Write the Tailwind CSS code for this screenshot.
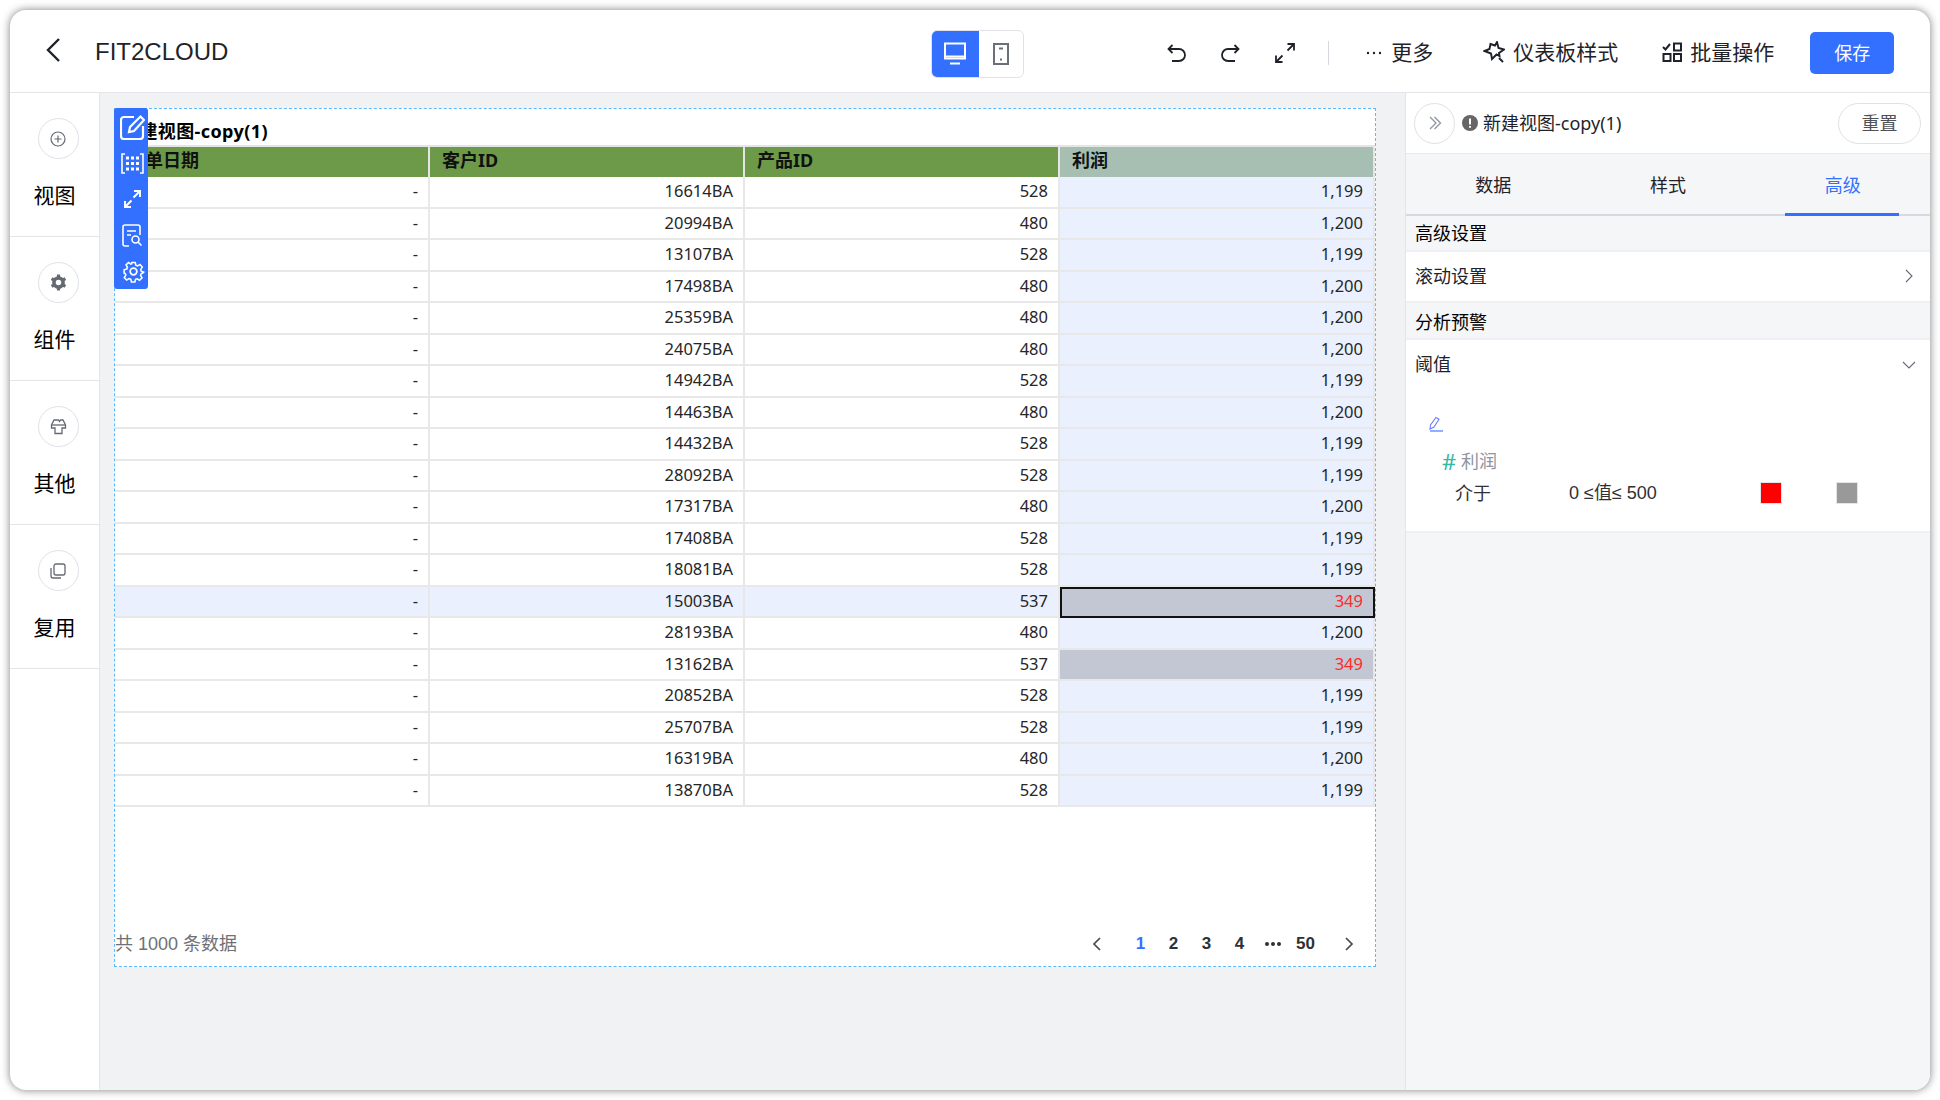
<!DOCTYPE html>
<html lang="zh-CN">
<head>
    <meta charset="UTF-8">
    <title>FIT2CLOUD</title>
    <script src="https://cdn.jsdelivr.net/npm/@tailwindcss/browser@4"></script>
</head>
<body class="bg-white h-[1100px] w-[1940px] overflow-hidden p-[10px] font-['Noto_Sans','Noto_Sans_CJK_SC',sans-serif] text-[#1f2329]">
<div class="w-[1920px] h-[1080px] bg-white rounded-[16px] overflow-hidden flex flex-col shadow-[0_0_8px_rgba(0,0,0,0.5)]">

    <!-- Header -->
    <header class="h-[83px] shrink-0 flex items-center pt-[3px] border-b border-[#e4e5e8]">
        <svg class="ml-[35px] w-[16px] h-[26px] -mt-[5px]" viewBox="0 0 16 26" fill="none" stroke="#1f2329" stroke-width="2.4"><path d="M14 2 3 13l11 11"/></svg>
        <span class="ml-[34px] text-[24px] -mt-[2px] font-['Liberation_Sans','Noto_Sans_CJK_SC',sans-serif]">FIT2CLOUD</span>
        <!-- device toggle -->
        <div class="ml-[703px] mt-[3px] flex h-[48px] w-[93px] rounded-[6px] overflow-hidden border border-[#e0e2e7]">
            <div class="w-[48px] -my-px -ml-px bg-[#3370ff] flex items-center justify-center">
                <svg class="w-[22px] h-[24px]" viewBox="0 0 22 24" fill="none" stroke="#fff" stroke-width="2"><rect x="1" y="1.500" width="20" height="15"/><path d="M1 14.500h20" stroke-width="2"/><path d="M6 21.500h10" stroke-width="2.200"/></svg>
            </div>
            <div class="flex-1 flex items-center justify-center">
                <svg class="w-[16px] h-[22px]" viewBox="0 0 16 22" fill="none" stroke="#6b6f76" stroke-width="2"><rect x="1" y="1" width="14" height="20"/><path d="M6 5.500h4M7 16.500h2"/></svg>
            </div>
        </div>
        <!-- undo / redo / full -->
        <svg class="ml-[142px] w-[22px] h-[22px]" viewBox="0 0 22 22" fill="none" stroke="#1f2329" stroke-width="1.800"><path d="M6.500 3 2.500 7l4 4"/><path d="M3 7h10a6 6 0 0 1 0 12H6"/></svg>
        <svg class="ml-[31px] w-[22px] h-[22px]" viewBox="0 0 22 22" fill="none" stroke="#1f2329" stroke-width="1.800"><path d="M15.500 3l4 4-4 4"/><path d="M19 7H9a6 6 0 0 0 0 12h7"/></svg>
        <svg class="ml-[33px] w-[22px] h-[22px]" viewBox="0 0 22 22" fill="none" stroke="#1f2329" stroke-width="1.800"><path d="M13.500 2H20v6.500M20 2l-6.500 6.500M2 13.500V20h6.500M2 20l6.500-6.500"/></svg>
        <div class="ml-[32px] w-px h-[24px] bg-[#d5d7dc]"></div>
        <svg class="ml-[37px] w-[16px] h-[4px]" viewBox="0 0 16 4" fill="#1f2329"><circle cx="2" cy="2" r="1.200"/><circle cx="8" cy="2" r="1.200"/><circle cx="14" cy="2" r="1.200"/></svg>
        <span class="ml-[9px] text-[21px]">更多</span>
        <svg class="ml-[50px] -mt-[2px] w-[22px] h-[22px]" viewBox="0 0 22 22" fill="none" stroke="#1f2329" stroke-width="1.900"><path d="M7.500 3l4.500 1.500L14 1l1.500 6 5.500 1.500-5 3.500.5 3-3-1.500-4.500 4.500-1-5.500L1.500 10l5-2z"/><path d="M16 17l4 4"/></svg>
        <span class="ml-[8px] text-[21px]">仪表板样式</span>
        <svg class="ml-[44px] -mt-[2px] w-[20px] h-[20px]" viewBox="0 0 20 20" fill="none" stroke="#1f2329" stroke-width="2"><path d="M1 5l2.500 2.500L8 2"/><rect x="12" y="1.500" width="7" height="7"/><rect x="1.500" y="12" width="7" height="7"/><rect x="12" y="12" width="7" height="7"/></svg>
        <span class="ml-[8px] text-[21px]">批量操作</span>
        <button class="ml-[36px] mt-[1px] w-[84px] h-[42px] bg-[#3370ff] rounded-[5px] text-white text-[18px]">保存</button>
    </header>

    <div class="flex-1 flex min-h-0">
        <!-- Left sidebar -->
        <aside class="w-[90px] shrink-0 border-r border-[#e4e5e8] text-black">
            <div class="h-[144px] border-b border-[#e4e5e8] flex flex-col items-center pt-[25px]">
                <div class="w-[41px] h-[41px] ml-[7px] rounded-full border border-[#dfe1e6] flex items-center justify-center">
                    <svg class="w-[16px] h-[16px]" viewBox="0 0 16 16" fill="none" stroke="#646a73" stroke-width="1.200"><circle cx="8" cy="8" r="7"/><path d="M8 4.500v7M4.500 8h7"/></svg>
                </div>
                <span class="mt-[21px] text-[21px]">视图</span>
            </div>
            <div class="h-[144px] border-b border-[#e4e5e8] flex flex-col items-center pt-[25px]">
                <div class="w-[41px] h-[41px] ml-[7px] rounded-full border border-[#dfe1e6] flex items-center justify-center">
                    <svg class="w-[17px] h-[17px]" viewBox="0 0 16 16" fill="none" stroke="#646a73"><circle cx="8" cy="8" r="4.300" stroke-width="3.400"/><path d="M8 .5v3M8 12.500v3M1.500 4.250l2.600 1.500M11.900 10.250l2.600 1.500M1.500 11.750l2.600-1.500M11.900 5.750l2.600-1.500" stroke-width="3"/></svg>
                </div>
                <span class="mt-[21px] text-[21px]">组件</span>
            </div>
            <div class="h-[144px] border-b border-[#e4e5e8] flex flex-col items-center pt-[25px]">
                <div class="w-[41px] h-[41px] ml-[7px] rounded-full border border-[#dfe1e6] flex items-center justify-center">
                    <svg class="w-[17px] h-[16px]" viewBox="0 0 16 16" fill="none" stroke="#646a73" stroke-width="1.300"><path d="M3.500 1H8l1 1.500L10 1h2.500L15 6v3h-3.500v5.500h-7V9H1V6z"/><path d="M1 6h14"/></svg>
                </div>
                <span class="mt-[21px] text-[21px]">其他</span>
            </div>
            <div class="h-[144px] border-b border-[#e4e5e8] flex flex-col items-center pt-[25px]">
                <div class="w-[41px] h-[41px] ml-[7px] rounded-full border border-[#dfe1e6] flex items-center justify-center">
                    <svg class="w-[16px] h-[16px]" viewBox="0 0 16 16" fill="none" stroke="#646a73" stroke-width="1.300"><rect x="4" y="1" width="11" height="11" rx="2"/><path d="M1 5v8a2 2 0 0 0 2 2h8"/></svg>
                </div>
                <span class="mt-[21px] text-[21px]">复用</span>
            </div>
        </aside>

        <!-- Canvas -->
        <main class="w-[1305px] shrink-0 bg-[#f1f2f4] pl-[14px] pt-[15px]">
            <div class="relative w-[1262px] h-[859px] bg-white border border-dashed border-[#5cb8ff] flex flex-col">
                <!-- hover toolbar -->
                <div class="absolute -left-px -top-px z-10 w-[34px] h-[181px] bg-[#3370ff] rounded-[3px] flex flex-col items-center pt-px pl-[2px] [&>div]:h-[36px] [&>div]:flex [&>div]:items-center [&>div]:justify-center">
                    <div><svg class="w-[25px] h-[26px]" viewBox="0 0 25 26" fill="none" stroke="#fff" stroke-width="2.200"><path d="M14 3H4a3 3 0 0 0-3 3v16a3 3 0 0 0 3 3h16a3 3 0 0 0 3-3V12"/><path d="M9 18l1-5L20.500 2.500l3.500 3.500L14 17z"/></svg></div>
                    <div><svg class="w-[23px] h-[21px]" viewBox="0 0 23 21" fill="none" stroke="#fff" stroke-width="1.600"><path d="M4 1H1v19h3M19 1h3v19h-3"/><path d="M5 5h13M5 10.500h13M5 16h13" stroke-width="3.200" stroke-dasharray="3 2"/></svg></div>
                    <div><svg class="w-[19px] h-[20px]" viewBox="0 0 19 20" fill="none" stroke="#fff" stroke-width="2"><path d="M11 2h6v6M17 2l-6.500 6.500M2 12v6h6M2 18l6.500-6.500"/></svg></div>
                    <div><svg class="w-[21px] h-[23px]" viewBox="0 0 21 23" fill="none" stroke="#fff" stroke-width="1.600"><path d="M7 22H3a2 2 0 0 1-2-2V3a2 2 0 0 1 2-2h13a2 2 0 0 1 2 2v8"/><path d="M5 7h9M5 11h4"/><circle cx="13.500" cy="15.500" r="3.500"/><path d="M16 18l3.500 3.500"/></svg></div>
                    <div><svg class="w-[23px] h-[23px] ml-[3px]" viewBox="0 0 24 24" fill="none" stroke="#fff" stroke-width="1.800"><circle cx="12" cy="12" r="3.500"/><path d="M10 1.500h4l.7 3.200 2 .9 2.800-1.700 2.700 3-1.800 2.600.5 2.200 3 1.100-.1 .2-3 1.600-.6 2 1.700 2.800-2.900 2.700-2.600-1.700-2 .7-.8 3.100h-4l-.7-3.200-2-.8-2.800 1.700-2.800-2.900 1.800-2.700-.7-2L1.100 14v-4l3.100-.8.800-2L3.300 4.400 6.200 1.600 8.900 3.400l1-.4z" transform="translate(1.200 1.200) scale(.9)"/></svg></div>
                </div>

                <h2 class="h-[36px] shrink-0 pl-[6px] pt-[9px] text-[18px] leading-[27px] font-bold tracking-[0.4px] text-black">新建视图-copy(1)</h2>

                <!-- Table header -->
                <div class="grid grid-cols-[repeat(4,315px)] h-[32px] shrink-0 border-t-2 border-[#e5e5e5] text-[18px] font-bold text-[#111] [&>div]:flex [&>div]:items-center [&>div]:pl-[12px] [&>div]:pb-[3px] [&>div]:border-r-2 [&>div]:border-[#e5e5e5]">
                    <div class="bg-[#6d9a49]">订单日期</div>
                    <div class="bg-[#6d9a49]">客户ID</div>
                    <div class="bg-[#6d9a49]">产品ID</div>
                    <div class="bg-[#a6bfb2]">利润</div>
                </div>

                <!-- Table body -->
                <div class="grid grid-cols-[repeat(4,315px)] auto-rows-[31.5px] shrink-0 text-[16.500px] text-[#262626] [&>div]:flex [&>div]:items-center [&>div]:justify-end [&>div]:pr-[10px] [&>div]:border-r-2 [&>div]:border-b-2 [&>div]:border-[#e8e8e8]">
                    <div>-</div><div>16614BA</div><div>528</div><div class="bg-[#eaf0fd]">1,199</div>
                    <div>-</div><div>20994BA</div><div>480</div><div class="bg-[#eaf0fd]">1,200</div>
                    <div>-</div><div>13107BA</div><div>528</div><div class="bg-[#eaf0fd]">1,199</div>
                    <div>-</div><div>17498BA</div><div>480</div><div class="bg-[#eaf0fd]">1,200</div>
                    <div>-</div><div>25359BA</div><div>480</div><div class="bg-[#eaf0fd]">1,200</div>
                    <div>-</div><div>24075BA</div><div>480</div><div class="bg-[#eaf0fd]">1,200</div>
                    <div>-</div><div>14942BA</div><div>528</div><div class="bg-[#eaf0fd]">1,199</div>
                    <div>-</div><div>14463BA</div><div>480</div><div class="bg-[#eaf0fd]">1,200</div>
                    <div>-</div><div>14432BA</div><div>528</div><div class="bg-[#eaf0fd]">1,199</div>
                    <div>-</div><div>28092BA</div><div>528</div><div class="bg-[#eaf0fd]">1,199</div>
                    <div>-</div><div>17317BA</div><div>480</div><div class="bg-[#eaf0fd]">1,200</div>
                    <div>-</div><div>17408BA</div><div>528</div><div class="bg-[#eaf0fd]">1,199</div>
                    <div>-</div><div>18081BA</div><div>528</div><div class="bg-[#eaf0fd]">1,199</div>
                    <div class="bg-[#eaf0fd]">-</div><div class="bg-[#eaf0fd]">15003BA</div><div class="bg-[#eaf0fd]">537</div><div class="bg-[#c2c7d3] text-[#ff2a2a] outline-2 -outline-offset-2 outline-[#111]">349</div>
                    <div>-</div><div>28193BA</div><div>480</div><div class="bg-[#eaf0fd]">1,200</div>
                    <div>-</div><div>13162BA</div><div>537</div><div class="bg-[#c2c7d3] text-[#ff2a2a]">349</div>
                    <div>-</div><div>20852BA</div><div>528</div><div class="bg-[#eaf0fd]">1,199</div>
                    <div>-</div><div>25707BA</div><div>528</div><div class="bg-[#eaf0fd]">1,199</div>
                    <div>-</div><div>16319BA</div><div>480</div><div class="bg-[#eaf0fd]">1,200</div>
                    <div>-</div><div>13870BA</div><div>528</div><div class="bg-[#eaf0fd]">1,199</div>
                </div>

                <!-- Pagination -->
                <div class="mt-auto h-[34px] flex items-start justify-between font-['Liberation_Sans','Noto_Sans_CJK_SC',sans-serif]">
                    <span class="text-[18px] leading-[24px] text-[#6f7175]">共 1000 条数据</span>
                    <div class="flex items-center h-[24px] text-[17px] font-bold text-[#303133]">
                        <svg class="w-[10px] h-[14px]" viewBox="0 0 10 14" fill="none" stroke="#4a4a4a" stroke-width="1.700"><path d="M8 1 2 7l6 6"/></svg>
                        <span class="ml-[22px] w-[33px] text-center text-[#3370ff]">1</span>
                        <span class="w-[33px] text-center">2</span>
                        <span class="w-[33px] text-center">3</span>
                        <span class="w-[33px] text-center">4</span>
                        <span class="w-[33px] flex items-center justify-center gap-[2px]"><i class="w-[4px] h-[4px] rounded-full bg-[#303133]"></i><i class="w-[4px] h-[4px] rounded-full bg-[#303133]"></i><i class="w-[4px] h-[4px] rounded-full bg-[#303133]"></i></span>
                        <span class="w-[33px] text-center">50</span>
                        <svg class="ml-[22px] mr-[21px] w-[10px] h-[14px]" viewBox="0 0 10 14" fill="none" stroke="#4a4a4a" stroke-width="1.700"><path d="M2 1l6 6-6 6"/></svg>
                    </div>
                </div>
            </div>
        </main>

        <!-- Right panel -->
        <aside class="flex-1 min-w-0 bg-[#f5f6f8] border-l border-[#e4e5e8] text-[18px]">
            <div class="h-[61px] bg-white border-b border-[#e9eaee] flex items-center pl-[8px] pr-[9px]">
                <div class="w-[41px] h-[41px] rounded-full border border-[#dfe1e6] flex items-center justify-center">
                    <svg class="w-[14px] h-[14px]" viewBox="0 0 14 14" fill="none" stroke="#8f959e" stroke-width="1.300"><path d="M2 1l6 6-6 6M6.500 1l6 6-6 6"/></svg>
                </div>
                <svg class="ml-[7px] w-[16px] h-[16px]" viewBox="0 0 16 16"><circle cx="8" cy="8" r="8" fill="#666"/><path d="M8 3.500v6M8 11v1.800" stroke="#fff" stroke-width="2"/></svg>
                <span class="ml-[5px] text-[#1f2329]">新建视图-copy(1)</span>
                <button class="ml-auto w-[83px] h-[41px] rounded-full border border-[#dfe1e6] text-[#4e5258]">重置</button>
            </div>
            <div class="h-[62px] pt-[3px] flex border-b-2 border-[#d8d9dc] [&>div]:w-[175px] [&>div]:flex [&>div]:items-center [&>div]:justify-center">
                <div>数据</div>
                <div>样式</div>
                <div class="relative text-[#3370ff]">高级<span class="absolute left-[30px] w-[114px] -bottom-[2px] h-[3px] bg-[#3370ff]"></span></div>
            </div>
            <div class="h-[36px] pl-[9px] flex items-center border-b-2 border-[#eef0f4] text-black">高级设置</div>
            <div class="h-[51px] bg-white pl-[9px] pr-[17px] flex items-center justify-between border-b-2 border-[#eef0f4]">
                滚动设置
                <svg class="w-[8px] h-[14px] -mt-[2px]" viewBox="0 0 8 14" fill="none" stroke="#646a73" stroke-width="1.100"><path d="M1 1l6 6-6 6"/></svg>
            </div>
            <div class="h-[37px] pl-[9px] pt-[3px] flex items-center border-b-2 border-[#eef0f4] text-black">分析预警</div>
            <div class="h-[193px] bg-white border-b-2 border-[#eef0f4] pl-[9px] flex flex-col">
                <div class="flex items-center justify-between pr-[14px] pt-[11px]">
                    <span class="leading-[27px]">阈值</span>
                    <svg class="w-[14px] h-[8px]" viewBox="0 0 14 8" fill="none" stroke="#646a73" stroke-width="1.100"><path d="M1 1l6 6 6-6"/></svg>
                </div>
                <svg class="ml-[13px] mt-[38px] w-[16px] h-[16px]" viewBox="0 0 16 16" fill="none" stroke="#6b7cff" stroke-width="1.100"><path d="M2 13l.5-4L8 1.500l3 1.800L6 11z"/><path d="M2 15h13" stroke="#3370ff"/></svg>
                <div class="ml-[27px] mt-[17px] flex items-center leading-[24px]">
                    <span class="text-[#35b8a6] w-[19px] text-[22px]">#</span>
                    <span class="text-[#8f959e]">利润</span>
                </div>
                <div class="ml-[40px] mt-[8px] flex items-center leading-[24px] text-[#303133]">
                    <span class="w-[114px]">介于</span>
                    <span class="w-[192px] font-['Liberation_Sans','Noto_Sans_CJK_SC',sans-serif]">0 ≤值≤ 500</span>
                    <span class="w-[20px] h-[20px] bg-[#ff0000] outline outline-[#e4e5e8]"></span>
                    <span class="ml-[56px] w-[20px] h-[20px] bg-[#999999] outline outline-[#e4e5e8]"></span>
                </div>
            </div>
        </aside>
    </div>
</div>
</body>
</html>
